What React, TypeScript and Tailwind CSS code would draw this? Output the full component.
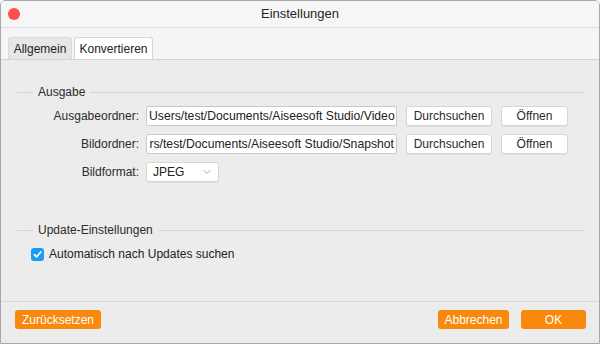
import { ChevronDown } from "lucide-react";

const font = { fontFamily: '"Liberation Sans", Arial, sans-serif' };

function SectionHeading({ title }: { title: string }) {
  return (
    <div className="flex h-4 items-center pl-4 pr-[15px]">
      <div className="h-px w-4 bg-[#d3d3d3]" />
      <span className="px-[5px] text-[12px] text-[#2b2b2b]">{title}</span>
      <div className="h-px flex-1 bg-[#d3d3d3]" />
    </div>
  );
}

function GrayButton({ label, width }: { label: string; width: string }) {
  return (
    <button
      className={`flex h-5 ${width} items-center justify-center rounded-[3px] border border-[#d6d6d6] bg-white text-[12px] text-[#2b2b2b] shadow-[0_1px_0_rgba(0,0,0,0.06)]`}
    >
      {label}
    </button>
  );
}

function OrangeButton({ label, width }: { label: string; width: string }) {
  return (
    <button
      className={`flex h-[19px] ${width} items-center justify-center rounded-[3px] bg-[#f8890c] text-[12px] text-white`}
    >
      {label}
    </button>
  );
}

function PathRow({ label, path, align }: { label: string; path: string; align: string }) {
  return (
    <div className="flex h-5 items-center">
      <div className="w-[122px] text-right text-[12px] text-[#2b2b2b]">{label}</div>
      <div
        className={`ml-[7px] flex h-5 w-[251px] items-center ${align} overflow-hidden rounded-[2px] border border-[#c9c9c9] bg-white px-[2px]`}
      >
        <span className="whitespace-nowrap text-[12.2px] text-[#222]">{path}</span>
      </div>
      <div className="ml-[9px]">
        <GrayButton label="Durchsuchen" width="w-[86px]" />
      </div>
      <div className="ml-[9px]">
        <GrayButton label="Öffnen" width="w-[67px]" />
      </div>
    </div>
  );
}

export default function App() {
  return (
    <div className="h-[344px] w-[600px] bg-white" style={font}>
      <div className="flex h-[344px] w-[600px] flex-col overflow-hidden rounded-t-[5px] border border-[#a8a8a8] bg-[#ececec]">
        {/* title bar */}
        <div className="flex h-[27px] shrink-0 items-center border-b border-[#dcdcdc] bg-[#f6f6f6]">
          <div className="flex w-20 items-center pl-[7px]">
            <div className="h-[12px] w-[12px] rounded-full bg-[#fc4f4b]" />
          </div>
          <div className="flex-1 text-center text-[13px] text-[#262626]">Einstellungen</div>
          <div className="w-20" />
        </div>

        {/* tabs */}
        <div className="flex h-[31px] shrink-0 items-end gap-[2px] bg-[#f5f5f5] pl-[7px]">
          <div className="flex h-[22px] w-[64px] items-center justify-center rounded-t-[3px] border border-b-0 border-[#dadada] bg-[#e6e6e6] text-[12px] text-[#222]">
            Allgemein
          </div>
          <div className="flex h-[22px] w-[79px] items-center justify-center rounded-t-[3px] border border-b-0 border-[#d6d6d6] bg-white text-[12px] text-[#222]">
            Konvertieren
          </div>
        </div>

        {/* content */}
        <div className="flex h-[242px] shrink-0 flex-col border-t border-[#d4d4d4] bg-[#ececec] pt-6">
          <SectionHeading title="Ausgabe" />
          <div className="mt-[6px] flex flex-col gap-2 pl-4">
            <PathRow label="Ausgabeordner:" path="Users/test/Documents/Aiseesoft Studio/Video" align="justify-start" />
            <PathRow label="Bildordner:" path="rs/test/Documents/Aiseesoft Studio/Snapshot" align="justify-end" />
            <div className="flex h-5 items-center">
              <div className="w-[122px] text-right text-[12px] text-[#2b2b2b]">Bildformat:</div>
              <div className="ml-[7px] flex h-5 w-[73px] items-center justify-between rounded-[3px] border border-[#d6d6d6] bg-white pl-[6px] pr-[5px] shadow-[0_1px_0_rgba(0,0,0,0.05)]">
                <span className="text-[12px] text-[#222]">JPEG</span>
                <ChevronDown className="h-3 w-3 text-[#8a8a8a]" strokeWidth={1.5} />
              </div>
            </div>
          </div>

          <div className="mt-10">
            <SectionHeading title="Update-Einstellungen" />
          </div>
          <div className="mt-[7px] flex items-center gap-[5px] pl-[30px]">
            <div className="flex h-[13px] w-[13px] items-center justify-center rounded-[3px] bg-[#1d9bf4]">
              <svg viewBox="0 0 12 12" className="h-[11px] w-[11px]">
                <path d="M2.5 6.2 L5 8.6 L9.6 3.2" fill="none" stroke="white" strokeWidth="1.8" strokeLinecap="round" strokeLinejoin="round" />
              </svg>
            </div>
            <span className="text-[12px] text-[#222]">Automatisch nach Updates suchen</span>
          </div>
        </div>

        {/* footer */}
        <div className="flex flex-1 items-start border-t border-[#d6d6d6] bg-[#ececec] pl-[14px] pr-[13px] pt-2">
          <OrangeButton label="Zurücksetzen" width="w-[86px]" />
          <div className="flex-1" />
          <OrangeButton label="Abbrechen" width="w-[71px]" />
          <div className="ml-3">
            <OrangeButton label="OK" width="w-[65px]" />
          </div>
        </div>
      </div>
    </div>
  );
}
